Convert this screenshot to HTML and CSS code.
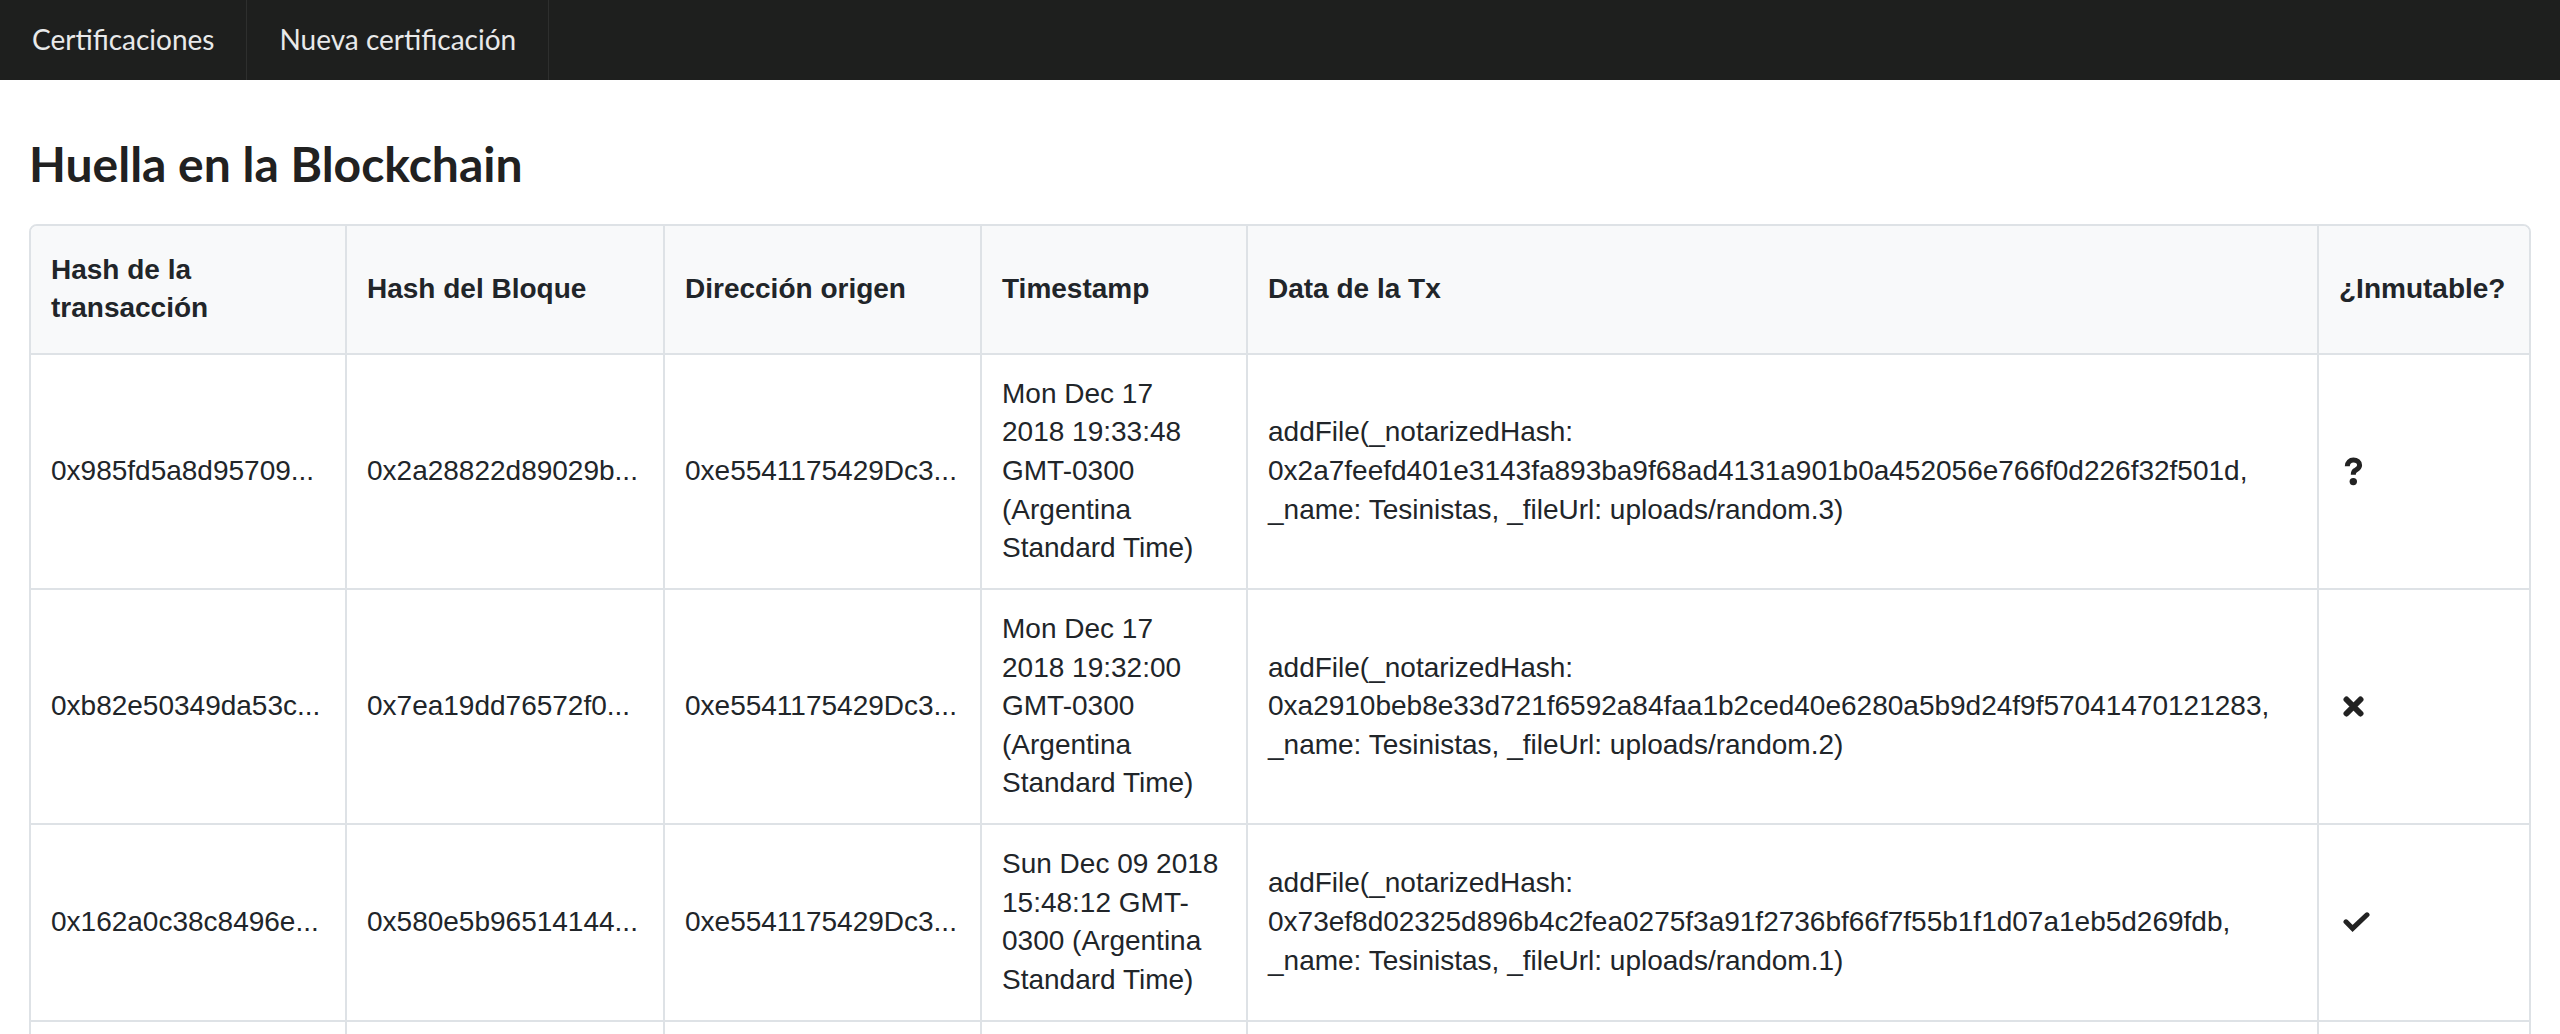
FILE: index.html
```html
<!DOCTYPE html>
<html lang="es">
<head>
<meta charset="utf-8">
<title>Huella en la Blockchain</title>
<link rel="stylesheet" href="styles.css">
</head>
<body>
<nav class="navbar">
  <a class="nav-item" href="#">Certificaciones</a>
  <a class="nav-item" href="#">Nueva certificación</a>
</nav>
<main class="content">
  <h1 class="title">Huella en la Blockchain</h1>
  <div class="table-wrap">
    <table class="tx-table">
      <thead>
        <tr>
          <th class="c1">Hash de la transacción</th>
          <th class="c2">Hash del Bloque</th>
          <th class="c3">Dirección origen</th>
          <th class="c4">Timestamp</th>
          <th class="c5">Data de la Tx</th>
          <th class="c6">¿Inmutable?</th>
        </tr>
      </thead>
      <tbody>
        <tr>
          <td class="hash">0x985fd5a8d95709...</td>
          <td class="hash">0x2a28822d89029b...</td>
          <td class="hash">0xe5541175429Dc3...</td>
          <td class="ts">Mon Dec 17 2018 19:33:48 GMT-0300 (Argentina Standard Time)</td>
          <td>addFile(_notarizedHash: 0x2a7feefd401e3143fa893ba9f68ad4131a901b0a452056e766f0d226f32f501d, _name: Tesinistas, _fileUrl: uploads/random.3)</td>
          <td class="status">
            <svg class="icon icon-q" width="20" height="29" viewBox="0 0 20 29" aria-label="desconocido"><path d="M4.3 9.2C4.3 5.4 7 3 10.4 3C14 3 16.6 5.2 16.6 8.2C16.6 11.2 14.2 12.3 12.2 13.5C10.7 14.4 10.3 15.3 10.3 17.8" fill="none" stroke="#222" stroke-width="5"/><circle cx="10.3" cy="24.6" r="3.7" fill="#222"/></svg>
          </td>
        </tr>
        <tr>
          <td class="hash">0xb82e50349da53c...</td>
          <td class="hash">0x7ea19dd76572f0...</td>
          <td class="hash">0xe5541175429Dc3...</td>
          <td class="ts">Mon Dec 17 2018 19:32:00 GMT-0300 (Argentina Standard Time)</td>
          <td>addFile(_notarizedHash: 0xa2910beb8e33d721f6592a84faa1b2ced40e6280a5b9d24f9f57041470121283, _name: Tesinistas, _fileUrl: uploads/random.2)</td>
          <td class="status">
            <svg class="icon icon-x" width="21" height="21" viewBox="0 0 21 21" aria-label="mutable"><path d="M3.5 3.5L17.5 17.5M17.5 3.5L3.5 17.5" fill="none" stroke="#222" stroke-width="6" stroke-linecap="round"/></svg>
          </td>
        </tr>
        <tr>
          <td class="hash">0x162a0c38c8496e...</td>
          <td class="hash">0x580e5b96514144...</td>
          <td class="hash">0xe5541175429Dc3...</td>
          <td class="ts">Sun Dec 09 2018 15:48:12 GMT-0300 (Argentina Standard Time)</td>
          <td>addFile(_notarizedHash: 0x73ef8d02325d896b4c2fea0275f3a91f2736bf66f7f55b1f1d07a1eb5d269fdb, _name: Tesinistas, _fileUrl: uploads/random.1)</td>
          <td class="status">
            <svg class="icon icon-check" width="27" height="20" viewBox="0 0 27 20" aria-label="inmutable"><path d="M3 9.8L9.6 16.4L24 2.8" fill="none" stroke="#222" stroke-width="5" stroke-linecap="round" stroke-linejoin="miter"/></svg>
          </td>
        </tr>
        <tr class="row-more">
          <td></td>
          <td></td>
          <td></td>
          <td></td>
          <td></td>
          <td></td>
        </tr>
      </tbody>
    </table>
  </div>
</main>
</body>
</html>
```

FILE: styles.css
```css
* {
  box-sizing: border-box;
}

html, body {
  margin: 0;
  padding: 0;
  background: #ffffff;
}

body {
  font-family: "Liberation Sans", Arial, Helvetica, sans-serif;
  color: #212529;
}

.navbar {
  display: flex;
  height: 80px;
  background: #1e1f1e;
}

.nav-item {
  display: block;
  height: 80px;
  padding: 0 32px;
  line-height: 78px;
  font-family: Lato, "Open Sans", sans-serif;
  font-size: 28px;
  color: #e8e9ea;
  text-decoration: none;
  border-right: 1px solid #2e2f2e;
}

.content {
  padding: 0 29px;
}

.title {
  margin: 55px 0 31px;
  font-family: Lato, "Open Sans", sans-serif;
  font-weight: 700;
  font-size: 48px;
  line-height: 1.2;
  color: #212121;
}

.table-wrap {
  border: 2px solid #dee2e6;
  border-radius: 8px;
  overflow: hidden;
}

.tx-table {
  width: 100%;
  table-layout: fixed;
  border-collapse: separate;
  border-spacing: 0;
  font-size: 28px;
  line-height: 1.38;
  color: #212529;
}

.tx-table th,
.tx-table td {
  border-right: 2px solid #dee2e6;
  border-bottom: 2px solid #dee2e6;
  vertical-align: middle;
  text-align: left;
}

.tx-table th:last-child,
.tx-table td:last-child {
  border-right: none;
}

.tx-table th {
  padding: 25px 20px;
  background: #f8f9fa;
  font-weight: 700;
}

.tx-table td {
  padding: 20px 20px;
  background: #ffffff;
}

.tx-table tr.row-more td {
  height: 195px;
}

.c1 { width: 316px; }
.c2 { width: 318px; }
.c3 { width: 317px; }
.c4 { width: 266px; }
.c5 { width: 1071px; }
.c6 { width: 210px; }

.tx-table td.hash {
  white-space: nowrap;
}

.tx-table td.ts {
  padding-right: 26px;
}

.tx-table td.status {
  padding-left: 24px;
}

.icon {
  display: block;
}
```
